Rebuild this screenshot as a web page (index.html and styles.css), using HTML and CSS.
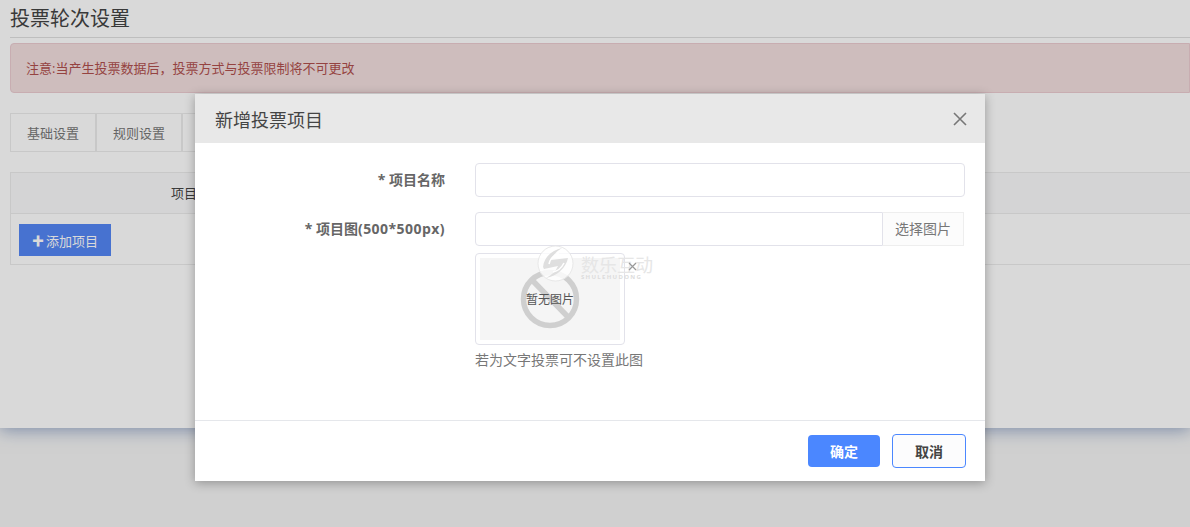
FILE: index.html
```html
<!DOCTYPE html>
<html lang="zh">
<head>
<meta charset="utf-8">
<title>投票轮次设置</title>
<link rel="stylesheet" href="styles.css">
</head>
<body>
<div class="panel">
  <h1 class="page-title">投票轮次设置</h1>
  <div class="alert">注意:当产生投票数据后，投票方式与投票限制将不可更改</div>
  <ul class="tabs">
    <li class="tab">基础设置</li>
    <li class="tab">规则设置</li>
    <li class="tab"></li>
  </ul>
  <div class="table">
    <div class="table-head"><span class="table-col">项目</span></div>
    <div class="table-body"><button class="add-btn"><span class="plus">✚</span>添加项目</button></div>
  </div>
</div>
<div class="overlay"></div>
<div class="modal">
  <div class="modal-head">
    <span class="modal-title">新增投票项目</span>
    <svg class="modal-close" width="14" height="14" viewBox="0 0 14 14"><path d="M1 1l12 12M13 1L1 13" stroke="#777" stroke-width="1.6" fill="none"/></svg>
  </div>
  <div class="modal-body">
    <div class="row">
      <label class="row-label">* 项目名称</label>
      <div class="row-field"><div class="input"></div></div>
    </div>
    <div class="row">
      <label class="row-label">* 项目图<span class="size">(500*500px)</span></label>
      <div class="row-field">
        <div class="input-group">
          <div class="input input-left"></div>
          <div class="addon">选择图片</div>
        </div>
        <div class="thumb">
          <div class="thumb-inner">
            <svg class="ban" width="60" height="60" viewBox="0 0 60 60"><circle cx="30" cy="30" r="26.5" fill="none" stroke="#cfcfcf" stroke-width="5.5"/><path d="M12 11l37 38" stroke="#cfcfcf" stroke-width="5.5"/></svg>
            <span class="thumb-text">暂无图片</span>
          </div>
        </div>
        <p class="hint">若为文字投票可不设置此图</p>
      </div>
    </div>
  </div>
  <div class="modal-foot">
    <button class="btn btn-primary">确定</button>
    <button class="btn btn-default">取消</button>
  </div>
</div>
<div class="watermark">
  <svg class="wm-logo" width="37" height="37" viewBox="0 0 37 37"><circle cx="18.5" cy="18.5" r="17.5" fill="#fff" fill-opacity=".8" stroke="#e8e8e8"/><path d="M6 22C7 12 15 5 25 3c-5 3-9 7-11 12l17-2c-2 10-11 18-22 20 6-3 10-7 12-12L7 24z" fill="#dfdfdf"/><path d="M12 19c1-5 5-9 10-11M16 27c5-1 9-5 11-9" stroke="#fff" stroke-width="1.5" fill="none"/></svg>
  <div class="wm-text">
    <span class="wm-cn">数乐互动</span>
    <span class="wm-en">SHULEHUDONG</span>
  </div>
  <svg class="wm-x" width="9" height="9" viewBox="0 0 9 9"><path d="M1 1l7 7M8 1L1 8" stroke="#999" stroke-width="1.2"/></svg>
</div>
</body>
</html>
```
FILE: styles.css
```css
* { box-sizing: border-box; }
html, body { margin: 0; padding: 0; height: 527px; overflow: hidden; }
body {
  background: #f5f5f5;
  font-family: "Open Sans", "Noto Sans CJK SC", sans-serif;
  font-size: 13px;
  color: #555;
  position: relative;
}
.panel {
  height: 428px;
  background: #fff;
  padding-left: 10px;
  box-shadow: 0 2px 16px rgba(50, 85, 150, .5);
}
.page-title {
  margin: 0;
  height: 38px;
  font-size: 20px;
  font-weight: 400;
  line-height: 38px;
  color: #444;
  border-bottom: 1px solid #e0e0e0;
}
.alert {
  margin-top: 5px;
  height: 50px;
  line-height: 48px;
  padding-left: 15px;
  font-size: 13px;
  color: #b04f4d;
  background: #f2dede;
  border: 1px solid #ebccd1;
  border-radius: 4px 0 0 4px;
}
.tabs {
  display: flex;
  list-style: none;
  margin: 20px 0 0;
  padding: 0;
}
.tab {
  width: 86px;
  height: 39px;
  line-height: 38px;
  text-align: center;
  font-size: 13px;
  color: #777;
  border: 1px solid #ececec;
}
.table { margin-top: 20px; border: 1px solid #ececec; border-right: 0; }
.table-head {
  height: 41px;
  line-height: 40px;
  background: #f9f9fb;
  border-bottom: 1px solid #ececec;
  padding-left: 160px;
  color: #444;
}
.table-body { height: 50px; padding: 10px 8px; }
.add-btn {
  width: 92px;
  height: 32px;
  padding: 0;
  border: 0;
  background: #5487f5;
  color: #fff;
  font: inherit;
  font-size: 13px;
}
.plus { font-size: 12px; margin-right: 2px; }
.overlay {
  position: absolute;
  inset: 0;
  background: rgba(0, 0, 0, .15);
}
.modal {
  position: absolute;
  left: 195px;
  top: 94px;
  width: 790px;
  height: 387px;
  background: #fff;
  box-shadow: 0 2px 10px rgba(0, 0, 0, .3);
  display: flex;
  flex-direction: column;
}
.modal-head {
  height: 49px;
  flex: none;
  background: #e8e8e8;
  padding: 0 18px 0 20px;
  display: flex;
  align-items: center;
  justify-content: space-between;
}
.modal-title { font-size: 18px; color: #444; }
.modal-body { flex: 1; padding-top: 20px; }
.row { display: flex; margin-bottom: 15px; }
.row-label {
  width: 250px;
  flex: none;
  text-align: right;
  font-size: 14px;
  font-weight: 700;
  color: #666;
  line-height: 33px;
}
.size { letter-spacing: .45px; }
.row-field { margin-left: 30px; width: 490px; }
.input {
  height: 34px;
  border: 1px solid #e2e2ea;
  border-radius: 4px;
  background: #fff;
}
.input-group { display: flex; width: 489px; }
.input-left { flex: 1; border-radius: 4px 0 0 4px; }
.addon {
  width: 81px;
  flex: none;
  font-size: 14px;
  line-height: 32px;
  text-align: center;
  color: #777;
  background: #fcfcfc;
  border: 1px solid #eee;
  border-left: 0;
}
.thumb {
  margin-top: 7px;
  width: 150px;
  height: 92px;
  padding: 4px;
  border: 1px solid #e2e2ea;
  border-radius: 4px;
}
.thumb-inner {
  position: relative;
  height: 82px;
  background: #f5f5f5;
  display: flex;
  align-items: center;
  justify-content: center;
}
.ban { position: absolute; left: 40px; top: 11px; }
.thumb-text { position: relative; font-size: 12px; color: #555; }
.hint { margin: 5px 0 0; line-height: 20px; font-size: 14px; color: #777; }
.modal-foot {
  height: 61px;
  flex: none;
  border-top: 1px solid #e5e7eb;
  display: flex;
  align-items: center;
  justify-content: flex-end;
  gap: 12px;
  padding-right: 19px;
}
.btn {
  font: inherit;
  font-size: 14px;
  font-weight: 700;
  padding: 0;
  border-radius: 4px;
}
.btn-primary {
  width: 72px;
  height: 32px;
  background: #4b87ff;
  color: #fff;
  border: 0;
}
.btn-default {
  width: 74px;
  height: 34px;
  background: #fcfcfd;
  color: #444;
  border: 1px solid #4b87ff;
}
.watermark {
  position: absolute;
  left: 537px;
  top: 245px;
  display: flex;
  gap: 7px;
}
.wm-text { display: flex; flex-direction: column; padding-top: 11px; width: 74px; }
.wm-cn { font-size: 18px; line-height: 18px; height: 18px; color: #e6e6e6; }
.wm-en { font-size: 6px; line-height: 7px; font-weight: 700; color: #dcdcdc; letter-spacing: 1.3px; white-space: nowrap; }
.wm-x { position: absolute; left: 91px; top: 17px; }
```
